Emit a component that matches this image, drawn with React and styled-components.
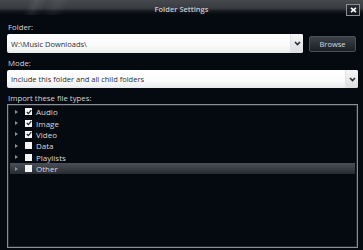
import React from 'react';
import styled, { createGlobalStyle } from 'styled-components';

const GlobalStyle = createGlobalStyle`
  html, body {
    margin: 0;
    padding: 0;
    background: #050910;
  }
  * {
    box-sizing: border-box;
  }
`;

const Window = styled.div`
  width: 363px;
  height: 250px;
  display: flex;
  flex-direction: column;
  background: #050910;
  font-family: 'Open Sans', 'Noto Sans', sans-serif;
  color: #d6d8db;
  overflow: hidden;
`;

const TitleBar = styled.div`
  height: 15px;
  flex: none;
  display: grid;
  grid-template-columns: 1fr auto 1fr;
  align-items: center;
  background:
    linear-gradient(115deg, transparent 8%, rgba(255, 255, 255, 0.07) 10%, transparent 13%, rgba(255, 255, 255, 0.05) 16%, transparent 19%),
    linear-gradient(#46494e 0, #383b40 55%, #14171c 75%, #060a10 100%);
`;

const Title = styled.div`
  grid-column: 2;
  font-size: 7.5px;
  font-weight: 600;
  color: #c9cbce;
  line-height: 15px;
  padding-top: 2px;
`;

const CloseButton = styled.div`
  grid-column: 3;
  justify-self: end;
  margin: 3px 3px 0 0;
  width: 14px;
  height: 12px;
  border: 1px solid #8c8f94;
  background: linear-gradient(#2a2d32, #111418);
  display: flex;
  align-items: center;
  justify-content: center;
`;

const Body = styled.div`
  flex: 1;
  display: flex;
  flex-direction: column;
  padding: 6px 5px 2px 7px;
  min-height: 0;
`;

const Label = styled.div`
  flex: none;
  font-size: 7.8px;
  line-height: 12px;
  height: 12px;
  margin-top: ${(p) => p.$top || 0}px;
  margin-bottom: ${(p) => (p.$tight ? 0 : 1)}px;
  padding-left: 1px;
  color: #d4d6d9;
`;

const Row = styled.div`
  flex: none;
  display: flex;
  align-items: center;
  gap: 6px;
`;

const Combo = styled.div`
  flex: none;
  width: ${(p) => (p.$full ? '100%' : '296px')};
  height: ${(p) => p.$h}px;
  background: linear-gradient(#ffffff 0, #fbfbfb 60%, #e9eaeb 100%);
  border-radius: 2px;
  display: flex;
  align-items: center;
  padding-left: 4px;
  font-size: 7.5px;
  color: #2a2c2f;
`;

const ComboText = styled.span`
  flex: 1;
`;

const Arrow = styled.div`
  width: 13px;
  height: 100%;
  display: flex;
  align-items: center;
  justify-content: center;
  border-left: 1px solid #e2e3e4;
  background: linear-gradient(#f6f6f7, #dcdde0);
  border-radius: 0 2px 2px 0;
`;

const BrowseButton = styled.div`
  width: 47px;
  height: 16px;
  border: 1px solid #4b5058;
  border-radius: 2px;
  background: linear-gradient(#3c424a 0, #2b3037 50%, #1b1f25 100%);
  display: flex;
  align-items: center;
  justify-content: center;
  font-size: 7.5px;
  color: #d9dbde;
`;

const ListBox = styled.div`
  flex: 1;
  border: 1px solid #8b8f95;
  box-shadow: inset 0 0 0 1px #23272d;
  background: #050910;
  padding: 1px 2px 0 2px;
`;

const Item = styled.div`
  height: 11.4px;
  display: flex;
  align-items: center;
  padding-left: 5px;
  font-size: 8px;
  color: #d9dbde;
  background: ${(p) =>
    p.$selected ? 'linear-gradient(#4b5058 0, #3b4048 45%, #262a31 100%)' : 'transparent'};
`;

const Expander = styled.span`
  width: 0;
  height: 0;
  border-top: 2.5px solid transparent;
  border-bottom: 2.5px solid transparent;
  border-left: 3px solid #8d9095;
  margin-right: 7px;
`;

const Check = styled.span`
  width: 7px;
  height: 7px;
  background: #f4f4f4;
  margin-right: 4px;
  display: flex;
  align-items: center;
  justify-content: center;
`;

const Chevron = () => (
  <svg width="7" height="5" viewBox="0 0 7 5">
    <path d="M1 1 L3.5 3.6 L6 1" fill="none" stroke="#2b2d31" strokeWidth="1.6" />
  </svg>
);

const types = [
  { name: 'Audio', checked: true },
  { name: 'Image', checked: true },
  { name: 'Video', checked: true },
  { name: 'Data', checked: false },
  { name: 'Playlists', checked: false },
  { name: 'Other', checked: false, selected: true },
];

const App = () => (
  <Window>
    <GlobalStyle />
    <TitleBar>
      <Title>Folder Settings</Title>
      <CloseButton>
        <svg width="7" height="6" viewBox="0 0 7 6">
          <path d="M1 0.8 L6 5.2 M6 0.8 L1 5.2" stroke="#ffffff" strokeWidth="1.6" />
        </svg>
      </CloseButton>
    </TitleBar>
    <Body>
      <Label>Folder:</Label>
      <Row>
        <Combo $h={19}>
          <ComboText>W:\Music Downloads\</ComboText>
          <Arrow>
            <Chevron />
          </Arrow>
        </Combo>
        <BrowseButton>Browse</BrowseButton>
      </Row>
      <Label $top={4}>Mode:</Label>
      <Combo $full $h={18}>
        <ComboText>Include this folder and all child folders</ComboText>
        <Arrow>
          <Chevron />
        </Arrow>
      </Combo>
      <Label $top={4} $tight>
        Import these file types:
      </Label>
      <ListBox>
        {types.map((t) => (
          <Item key={t.name} $selected={t.selected}>
            <Expander />
            <Check>
              {t.checked && (
                <svg width="6" height="6" viewBox="0 0 6 6">
                  <path d="M0.8 3 L2.4 4.6 L5.3 1.2" fill="none" stroke="#1c1f24" strokeWidth="1.3" />
                </svg>
              )}
            </Check>
            {t.name}
          </Item>
        ))}
      </ListBox>
    </Body>
  </Window>
);

export default App;
